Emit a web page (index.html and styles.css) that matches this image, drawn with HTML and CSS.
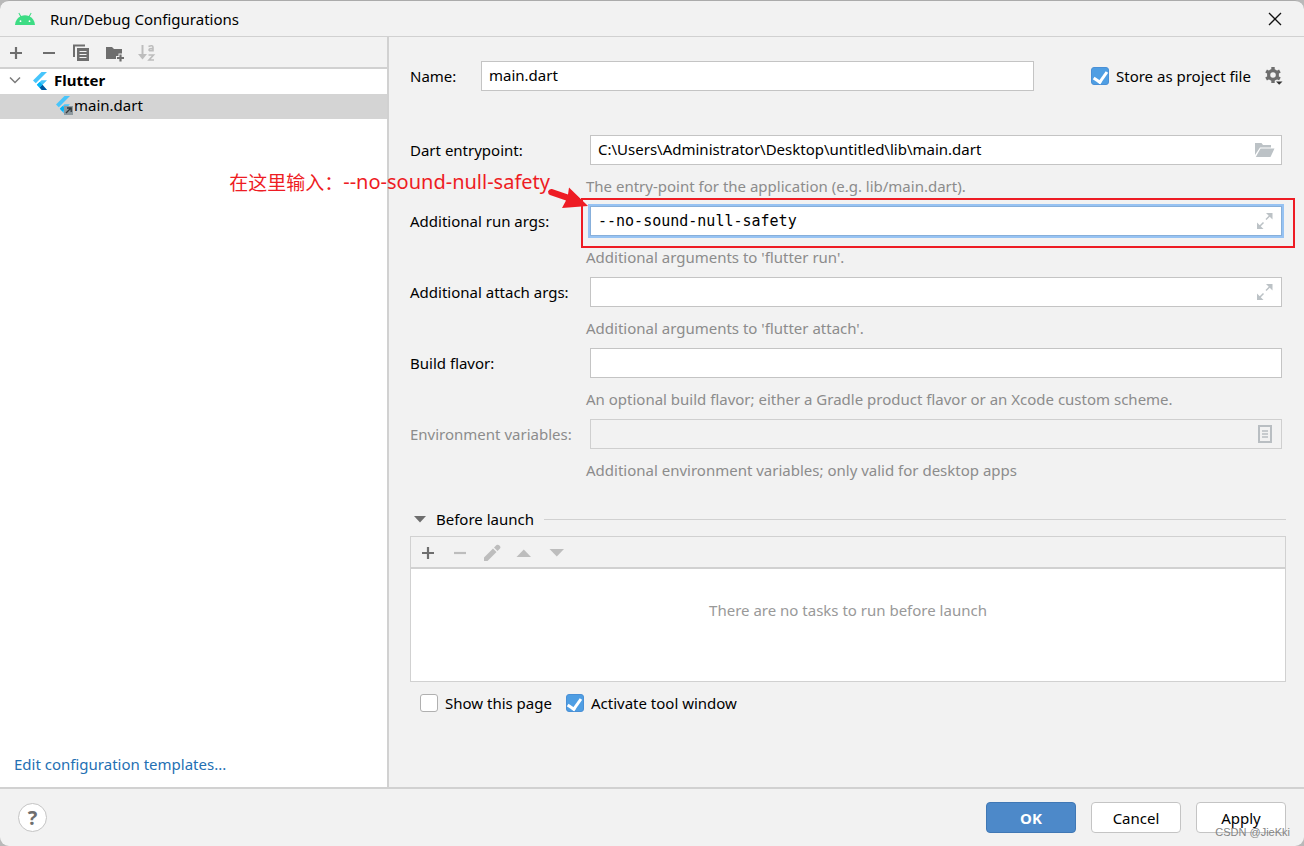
FILE: index.html
```html
<!DOCTYPE html>
<html lang="en">
<head>
<meta charset="utf-8">
<title>Run/Debug Configurations</title>
<link rel="stylesheet" href="styles.css">
</head>
<body>
<div class="dialog">
  <header class="titlebar">
    <svg class="android" width="22" height="14" viewBox="0 0 22 14"><path d="M1 13C1.300 9 3.500 6 6.200 4.600L4.400 1.200L5.200.8L7.200 4.100Q11 2.600 14.800 4.100L16.800.8L17.600 1.200L15.800 4.600C18.500 6 20.700 9 21 13Z" fill="#3ddc84"/><circle cx="6.500" cy="9.200" r=".9" fill="#fff"/><circle cx="15.500" cy="9.200" r=".9" fill="#fff"/></svg>
    <h1 class="title">Run/Debug Configurations</h1>
    <button class="icon-btn close" aria-label="Close"><svg width="14" height="14" viewBox="0 0 14 14"><path d="M1 1L13 13M13 1L1 13" stroke="#111" stroke-width="1.300" fill="none"/></svg></button>
  </header>

  <div class="content">
    <aside class="sidebar">
      <div class="toolbar side-tools">
        <button class="icon-btn" aria-label="Add"><svg width="18" height="18" viewBox="0 0 18 18"><path d="M9 3V15M3 9H15" stroke="#6e6e6e" stroke-width="2.200"/></svg></button>
        <button class="icon-btn" aria-label="Remove"><svg width="18" height="18" viewBox="0 0 18 18"><path d="M3 9H15" stroke="#6e6e6e" stroke-width="2.200"/></svg></button>
        <button class="icon-btn" aria-label="Copy"><svg width="18" height="18" viewBox="0 0 18 18"><path d="M1 13V1.500H12" fill="none" stroke="#6e6e6e" stroke-width="2"/><path fill="#6e6e6e" d="M4 4H16V17H4Z"/><path d="M6.500 7.500H13.500M6.500 10.500H13.500M6.500 13.500H13.500" stroke="#f2f2f2" stroke-width="1.200"/></svg></button>
        <button class="icon-btn" aria-label="New folder"><svg width="18" height="18" viewBox="0 0 18 18"><path fill="#6e6e6e" d="M0 3H6L8 5H16V9.500H12.500V12H10V15H0Z"/><path d="M14.500 10.500V17.500M11 14H18" stroke="#6e6e6e" stroke-width="2.200"/></svg></button>
        <button class="icon-btn" aria-label="Sort" disabled><svg width="18" height="18" viewBox="0 0 18 18"><path d="M3.500 1V13" stroke="#bdbdbd" stroke-width="2"/><path d="M-1 10H8L3.500 15.500Z" fill="#bdbdbd"/><path d="M9.500 2.500Q14 .5 14 3.500V7.500M14 4.500Q10 4.200 10 6Q11 7.600 14 6M9.500 11H14.500L10 16H15" fill="none" stroke="#bdbdbd" stroke-width="1.600"/></svg></button>
      </div>
      <ul class="tree">
        <li class="node">
          <svg width="12" height="8" viewBox="0 0 12 8"><path d="M1 1.500L6 6.500L11 1.500" fill="none" stroke="#7a7a7a" stroke-width="1.500"/></svg>
          <svg class="flutter" width="15" height="18" viewBox="0 0 15 18"><path d="M8.500 0H14L2.800 11.200L0 8.500Z" fill="#47c5fb"/><path d="M8.500 8.300H14L9.500 12.800L14 18H8.500L3.800 12.800Z" fill="#47c5fb"/><path d="M6.600 15.500L9.400 12.800L14 18H8.800Z" fill="#00569e"/><path d="M3.800 12.800L6.600 10.100L9.400 12.800L6.600 15.500Z" fill="#00b5f8"/></svg>
          <b>Flutter</b>
        </li>
        <li class="node leaf selected">
          <svg class="flutter" width="18" height="19" viewBox="0 0 18 19"><path d="M8.500 0H14L2.800 11.200L0 8.500Z" fill="#47c5fb"/><path d="M8.500 8.300H14L9.500 12.800L14 18H8.500L3.800 12.800Z" fill="#47c5fb"/><path d="M3.800 12.800L6.600 10.100L9.400 12.800L6.600 15.500Z" fill="#00b5f8"/><path fill="#8e999f" d="M8 10H17V19H8Z"/><path d="M10 17L15 12M11 12H15.200V16" stroke="#31373a" stroke-width="1.300" fill="none"/></svg>
          <span>main.dart</span>
        </li>
      </ul>
      <a class="templates" href="#">Edit configuration templates...</a>
    </aside>

    <main class="main">
      <div class="name-row">
        <label for="name">Name:</label>
        <input class="text" id="name" value="main.dart">
        <div class="store">
          <input class="check" type="checkbox" id="store" checked><label for="store">Store as project file</label>
          <button class="icon-btn" aria-label="Storage options"><svg width="18" height="18" viewBox="0 0 18 18"><circle cx="8" cy="8" r="4.400" fill="none" stroke="#6e6e6e" stroke-width="3.200"/><path d="M8 0V3M8 13V16M1.100 4L3.700 5.500M12.300 10.500L14.900 12M1.100 12L3.700 10.500M12.300 5.500L14.900 4" stroke="#6e6e6e" stroke-width="3.400"/><path d="M10 13.500H18V15L14 18L10 15Z" fill="#f2f2f2"/><path d="M11 14.500H17.500L14.200 17.800Z" fill="#333"/></svg></button>
        </div>
      </div>

      <div class="fields">
        <div class="field">
          <label for="entry">Dart entrypoint:</label>
          <div class="box"><input class="text" id="entry" value="C:\Users\Administrator\Desktop\untitled\lib\main.dart">
            <button class="icon-btn in-box" aria-label="Browse"><svg width="20" height="16" viewBox="0 0 20 16"><path fill="#bcc2c6" d="M0 1H6.500L8 3H16V5.500H5L0 13Z"/><path fill="#bcc2c6" d="M5.500 6.500H19.500L15.500 15H.8Z"/></svg></button></div>
          <p class="hint">The entry-point for the application (e.g. lib/main.dart).</p>
        </div>
        <div class="field">
          <label for="run">Additional run args:</label>
          <div class="box focused"><input class="text mono" id="run" value="--no-sound-null-safety">
            <button class="icon-btn in-box" aria-label="Expand"><svg width="20" height="16" viewBox="0 0 20 16"><path fill="#bcc2c6" d="M11 0H17.500V6.500Z"/><path fill="#bcc2c6" d="M2 9.500V16H8.500Z"/><path d="M11 6.500L16 1.500M3.500 14.500L8.500 9.500" stroke="#bcc2c6" stroke-width="1.500"/></svg></button>
            <div class="marker"></div>
            <div class="note"><span class="note-cjk">在这里输入：</span><span>--no-sound-null-safety</span></div>
            <svg class="arrow" width="44" height="26" viewBox="0 0 44 26"><path d="M5 3Q2 2.500 1 5.500Q1 8 3 9L19 14.500L15 22L41 20L22 1.500L21 8.500Z" fill="#ee1c24"/></svg>
          </div>
          <p class="hint">Additional arguments to 'flutter run'.</p>
        </div>
        <div class="field">
          <label for="attach">Additional attach args:</label>
          <div class="box"><input class="text" id="attach">
            <button class="icon-btn in-box" aria-label="Expand"><svg width="20" height="16" viewBox="0 0 20 16"><path fill="#bcc2c6" d="M11 0H17.500V6.500Z"/><path fill="#bcc2c6" d="M2 9.500V16H8.500Z"/><path d="M11 6.500L16 1.500M3.500 14.500L8.500 9.500" stroke="#bcc2c6" stroke-width="1.500"/></svg></button></div>
          <p class="hint">Additional arguments to 'flutter attach'.</p>
        </div>
        <div class="field">
          <label for="flavor">Build flavor:</label>
          <div class="box"><input class="text" id="flavor"></div>
          <p class="hint">An optional build flavor; either a Gradle product flavor or an Xcode custom scheme.</p>
        </div>
        <div class="field off">
          <label for="env">Environment variables:</label>
          <div class="box"><input class="text" id="env" disabled>
            <button class="icon-btn in-box" aria-label="Edit variables" disabled><svg width="20" height="18" viewBox="0 0 20 18"><path d="M4 1H16V17H4Z" fill="none" stroke="#b9bec2" stroke-width="2"/><path d="M7 6H13M7 9H13M7 12H13" stroke="#b9bec2" stroke-width="1.300"/></svg></button></div>
          <p class="hint">Additional environment variables; only valid for desktop apps</p>
        </div>
      </div>

      <section class="launch">
        <h2 class="section-head"><svg width="12" height="8" viewBox="0 0 12 8"><path d="M0 1H12L6 7.500Z" fill="#6e6e6e"/></svg><span>Before launch</span></h2>
        <div class="panel">
          <div class="toolbar panel-tools">
            <button class="icon-btn" aria-label="Add task"><svg width="18" height="18" viewBox="0 0 18 18"><path d="M9 3V15M3 9H15" stroke="#6e6e6e" stroke-width="2.200"/></svg></button>
            <button class="icon-btn" aria-label="Remove task" disabled><svg width="18" height="18" viewBox="0 0 18 18"><path d="M3 9H15" stroke="#bdbdbd" stroke-width="2.200"/></svg></button>
            <button class="icon-btn" aria-label="Edit task" disabled><svg width="18" height="18" viewBox="0 0 18 18"><path d="M1 17V13.500L10 4.500L13.500 8L4.500 17ZM11 3.500L13.500 1Q15 0 17 2Q18 3.500 17 4.500L14.500 7Z" fill="#bdbdbd"/></svg></button>
            <button class="icon-btn" aria-label="Move up" disabled><svg width="18" height="18" viewBox="0 0 18 18"><path d="M1.500 13H16L8.800 5.500Z" fill="#bdbdbd"/></svg></button>
            <button class="icon-btn" aria-label="Move down" disabled><svg width="18" height="18" viewBox="0 0 18 18"><path d="M2.500 5H17L9.800 12.500Z" fill="#bdbdbd"/></svg></button>
          </div>
          <p class="empty">There are no tasks to run before launch</p>
        </div>
        <div class="options">
          <input class="check" type="checkbox" id="show"><label for="show">Show this page</label>
          <input class="check" type="checkbox" id="activate" checked><label for="activate">Activate tool window</label>
        </div>
      </section>
    </main>
  </div>

  <footer class="footer">
    <button class="help" aria-label="Help">?</button>
    <button class="btn primary">OK</button>
    <button class="btn">Cancel</button>
    <button class="btn">Apply</button>
    <span class="watermark">CSDN @JieKki</span>
  </footer>
</div>
</body>
</html>
```
FILE: styles.css
```css
* { box-sizing: border-box; }
body {
  margin: 0;
  background: #b9b9b9;
  color: #000;
  font: 15px/20px "Noto Sans", "Noto Sans CJK SC", sans-serif;
}
h1, h2, p, ul { margin: 0; padding: 0; font: inherit; }
button, input { font: inherit; color: inherit; }
svg { display: block; flex: none; overflow: visible; }

.dialog {
  display: flex;
  flex-direction: column;
  min-height: 100vh;
  border-top: 1px solid #ababab;
  border-radius: 9px;
  background: #f2f2f2;
  overflow: hidden;
}
.titlebar {
  display: flex;
  align-items: center;
  height: 36px;
  padding: 0 22px 0 14px;
  border-bottom: 1px solid #d1d1d1;
}
.title { margin-left: 14px; }
.close { margin-left: auto; }
.icon-btn { display: flex; padding: 0; border: 0; background: none; }

.content { display: flex; flex: 1; }
.sidebar {
  display: flex;
  flex-direction: column;
  width: 389px;
  flex: none;
  border-right: 2px solid #d1d1d1;
  background: #fff;
}
.toolbar {
  display: flex;
  align-items: center;
  height: 32px;
  padding-top: 2px;
  border-bottom: 2px solid #d1d1d1;
  background: #f2f2f2;
}
.side-tools { gap: 15px; padding-left: 7px; }
.tree { list-style: none; }
.node {
  display: flex;
  align-items: center;
  height: 25px;
  padding: 0 0 4px 9px;
}
.node .flutter { margin: 2px 0 0 12px; }
.node b { margin-left: 6px; }
.leaf { padding-left: 44px; }
.selected { background: #d4d4d4; }
.templates {
  margin: auto 0 13px 14px;
  color: #2470b3;
  text-decoration: none;
}

.main { flex: 1; min-width: 0; padding: 24px 18px 24px 21px; }
.name-row { display: flex; align-items: center; padding-right: 3px; }
.name-row > label { width: 71px; }
.name-row .text { flex: 1; min-width: 0; }
.store { display: flex; align-items: center; width: 192px; margin-left: 57px; }
.store label { flex: 1; margin-left: 7px; }
.text {
  width: 100%;
  height: 30px;
  padding: 0 7px 2px;
  border: 1px solid #c4c4c4;
  border-radius: 0;
  background: #fff;
  outline: none;
}
.text:disabled { background: #f2f2f2; border-color: #cfcfcf; }
.mono { padding-bottom: 0; font-family: "DejaVu Sans Mono", monospace; }

.fields { margin-top: 44px; padding-right: 4px; }
.field {
  display: grid;
  grid-template-columns: 180px 1fr;
  grid-template-rows: 30px 41px;
  align-items: center;
}
.box { position: relative; display: flex; }
.in-box { position: absolute; right: 7px; top: 0; height: 100%; align-items: center; }
.hint { grid-column: 2; margin-left: -4px; color: #8c8c8c; }
.off label { color: #8c8c8c; }
.focused .text { border-color: #87afda; box-shadow: 0 0 0 2px #97c3f3; }
.marker {
  position: absolute;
  inset: -8px -13px -12px -9px;
  border: 2px solid #ee1c24;
  pointer-events: none;
}
.note {
  position: absolute;
  right: calc(100% + 40px);
  top: -37px;
  display: flex;
  align-items: center;
  color: #ee1c24;
  font-size: 20px;
  line-height: 26px;
  white-space: nowrap;
}
.note-cjk { font-family: "Noto Sans CJK SC", sans-serif; font-size: 19px; }
.arrow { position: absolute; left: -43px; top: -20px; }

.launch { margin-top: 19px; }
.section-head { display: flex; align-items: center; padding-left: 4px; gap: 10px; }
.section-head::after { content: ""; flex: 1; height: 1px; background: #d1d1d1; }
.panel { margin-top: 7px; border: 1px solid #d1d1d1; background: #fff; }
.panel-tools { gap: 14px; padding-left: 8px; }
.empty { padding: 31px 0 61px; text-align: center; color: #999; }
.options { display: flex; align-items: center; margin-top: 11px; padding-left: 10px; }
.options label { margin: 0 14px 0 7px; }

.check {
  display: flex;
  justify-content: center;
  width: 18px;
  height: 18px;
  margin: 0;
  flex: none;
  appearance: none;
  border: 1px solid #b0b0b0;
  border-radius: 3px;
  background: #fff;
}
.check:checked { border-color: #4a90d6; background: #4f9ee3; }
.check:checked::before {
  content: "";
  width: 6px;
  height: 11px;
  margin-top: 1px;
  border: solid #fff;
  border-width: 0 3px 3px 0;
  transform: rotate(35deg);
}

.footer {
  position: relative;
  display: flex;
  align-items: center;
  gap: 15px;
  height: 59px;
  padding: 0 18px;
  border-top: 2px solid #d1d1d1;
}
.help {
  width: 29px;
  height: 29px;
  margin-right: auto;
  padding: 0;
  border: 1px solid #c4c4c4;
  border-radius: 50%;
  background: #fff;
  color: #6e6e6e;
  font: bold 20px/26px "Noto Sans", sans-serif;
}
.btn {
  width: 90px;
  height: 31px;
  padding: 0;
  border: 1px solid #c4c4c4;
  border-radius: 4px;
  background: #fff;
}
.primary { border-color: #4078b5; background: #4d89c9; color: #fff; font-weight: bold; }
.watermark {
  position: absolute;
  right: 14px;
  bottom: 7px;
  color: #858585;
  font: 11px/14px "Liberation Sans", sans-serif;
}
```
